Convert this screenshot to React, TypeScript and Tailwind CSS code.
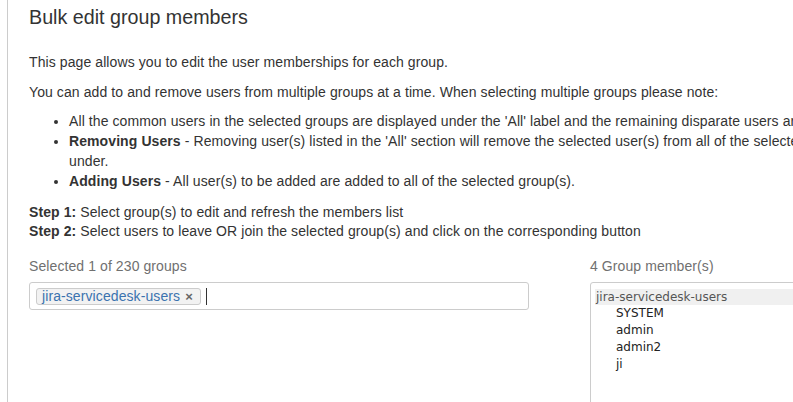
import React from "react";

const members = ["SYSTEM", "admin", "admin2", "ji"];

export default function App() {
  return (
    <div className="w-[793px] h-[402px] overflow-hidden bg-white font-['Liberation_Sans',Arial,sans-serif] text-[#333]">
      <div className="ml-[7px] border-l border-[#ccc] h-full pl-[21px] w-[1100px]">
        <h1 className="pt-[5px] text-[19.7px] leading-[24px] font-normal text-[#333]">Bulk edit group members</h1>

        <div className="tracking-[0.09px]">
          <p className="mt-[23px] text-[14px] leading-[20px]">This page allows you to edit the user memberships for each group.</p>
          <p className="mt-[10px] text-[14px] leading-[20px]">
            You can add to and remove users from multiple groups at a time. When selecting multiple groups please note:
          </p>

          <ul className="mt-[9px] pl-[40px] list-disc text-[14px] leading-[20px] w-[1000px]">
            <li className="whitespace-nowrap">
              All the common users in the selected groups are displayed under the 'All' label and the remaining disparate users are displayed under their group.
            </li>
            <li>
              <span className="whitespace-nowrap">
                <b>Removing Users</b> - Removing user(s) listed in the 'All' section will remove the selected user(s) from all of the selected group(s) they are
              </span>
              <br />
              under.
            </li>
            <li>
              <b>Adding Users</b> - All user(s) to be added are added to all of the selected group(s).
            </li>
          </ul>

          <div className="mt-[12px] text-[14px] leading-[19px]">
            <div>
              <b>Step 1:</b> Select group(s) to edit and refresh the members list
            </div>
            <div>
              <b>Step 2:</b> Select users to leave OR join the selected group(s) and click on the corresponding button
            </div>
          </div>

          <div className="mt-[15px] flex gap-[61px]">
            <div className="w-[500px]">
              <div className="text-[14px] leading-[20px] text-[#707070]">Selected 1 of 230 groups</div>
              <div className="mt-[6px] h-[28px] border border-[#ccc] rounded-[3px] flex items-center pl-[6px] gap-[5px]">
                <span className="flex items-center h-[17px] border border-[#ccc] rounded-[3px] bg-[#f2f2f2] pl-[5px] pr-[7px] text-[14px] leading-[15px] text-[#3b73af]">
                  jira-servicedesk-users
                  <span className="ml-[5px] text-[13px] font-bold text-[#666]">×</span>
                </span>
                <span className="w-px h-[17px] bg-[#333]" />
              </div>
            </div>

            <div className="w-[260px] tracking-normal">
              <div className="text-[14px] leading-[20px] text-[#707070] tracking-[0.09px]">4 Group member(s)</div>
              <div className="mt-[6px] h-[140px] border border-[#ccc] rounded-[3px] pt-[6px] pl-[4px] font-['DejaVu_Sans',Tahoma,sans-serif] text-[12px]">
                <div className="h-[16px] leading-[16px] bg-[#f0f0f0] text-[#555] pl-[1px]">jira-servicedesk-users</div>
                {members.map((m) => (
                  <div key={m} className="h-[17px] leading-[17px] pl-[21px] text-[#222]">
                    {m}
                  </div>
                ))}
              </div>
            </div>
          </div>
        </div>
      </div>
    </div>
  );
}
